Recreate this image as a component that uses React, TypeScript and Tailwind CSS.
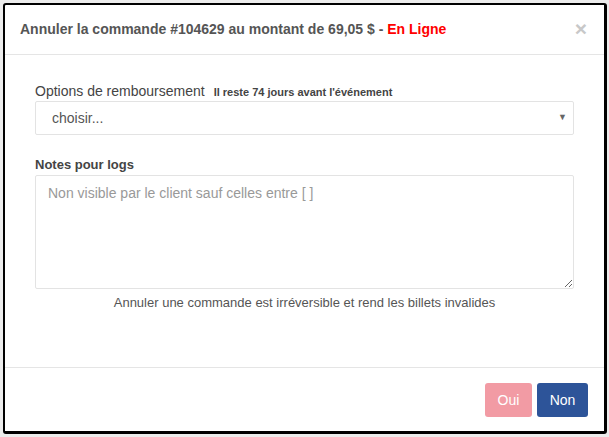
import React from 'react'

const App: React.FC = () => {
    return (
        <div className="w-[609px] h-[437px] bg-[#ececec] pt-[3px] pl-[3px] font-['Liberation_Sans',Arial,sans-serif]">
            <div className="w-[604px] h-[431px] bg-white border-2 border-r-[3px] border-b-[3px] border-black rounded-[3px] flex flex-col">
                {/* HEADER */}
                <div className="h-[50px] shrink-0 border-b border-[#e5e5e5] flex items-center justify-between pl-[15px] pr-[17px]">
                    <h4 className="text-[14px] font-bold text-[#555]">
                        Annuler la commande #104629 au montant de 69,05 $ - <span className="text-[#ff0000]">En Ligne</span>
                    </h4>
                    <span className="text-[21px] font-bold leading-none text-[#c8c8c8] -mt-[2px]">×</span>
                </div>

                {/* BODY */}
                <div className="flex-1 px-[30px] pt-[26px]">
                    <div className="flex items-baseline h-[20px] leading-[20px]">
                        <label className="text-[14px] text-[#444]">Options de remboursement</label>
                        <span className="ml-[9px] text-[11px] font-bold text-[#444]">Il reste 74 jours avant l'événement</span>
                    </div>
                    <div className="h-[34px] border border-[#e3e3e3] rounded-[2px] flex items-center justify-between pl-[16px] pr-[6px]">
                        <span className="text-[14px] text-[#555]">choisir...</span>
                        <span className="text-[9px] text-[#666]">▼</span>
                    </div>

                    <label className="block mt-[20px] h-[20px] leading-[20px] text-[13px] font-bold text-[#444]">Notes pour logs</label>
                    <textarea
                        className="block w-full h-[114px] border border-[#e3e3e3] rounded-[2px] px-[12px] py-[7px] text-[14px] text-[#555] placeholder-[#999] outline-none"
                        placeholder="Non visible par le client sauf celles entre [ ]"
                    />
                    <p className="mt-[5px] text-center text-[13px] leading-[18px] text-[#555]">
                        Annuler une commande est irréversible et rend les billets invalides
                    </p>
                </div>

                {/* FOOTER */}
                <div className="h-[64px] shrink-0 border-t border-[#e5e5e5] flex items-start justify-end gap-[5px] pt-[15px] pr-[16px]">
                    <button className="w-[47px] h-[34px] rounded-[3px] bg-[#f29ba4] text-white text-[14px]">Oui</button>
                    <button className="w-[51px] h-[34px] rounded-[3px] bg-[#2d5499] text-white text-[14px]">Non</button>
                </div>
            </div>
        </div>
    )
}

export default App
